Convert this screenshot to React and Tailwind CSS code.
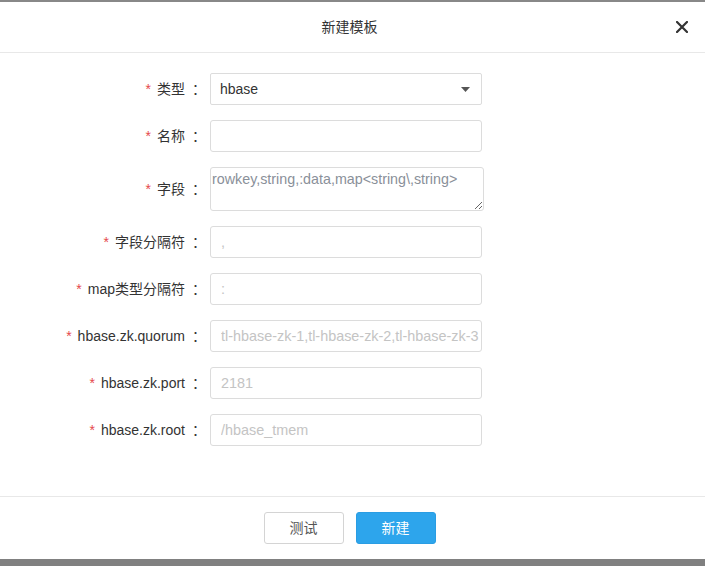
import React from "react";

const font = { fontFamily: '"Liberation Sans", "Noto Sans CJK SC", sans-serif' };

function Label({ children }) {
  return (
    <div className="w-[206px] shrink-0 flex items-center justify-end text-[14px] text-[#333] leading-none">
      <span className="text-[#e5484d] mr-[6px] text-[14px]">*</span>
      <span>{children}</span>
      <span className="ml-[7px]">：</span>
    </div>
  );
}

function Row({ label, children, tall }) {
  return (
    <div className={`flex ${tall ? "h-[44px]" : "h-[32px]"}`}>
      <Label>{label}</Label>
      <div className="ml-[4px]">{children}</div>
    </div>
  );
}

function TextInput({ placeholder, clip }) {
  return (
    <input
      readOnly
      placeholder={placeholder}
      className={`w-[272px] h-[32px] border border-[#dcdcdc] rounded-[3px] pl-[10px] ${clip ? "pr-0" : "pr-[10px]"} text-[14.4px] text-[#333] placeholder:text-[#c4c4c4] outline-none bg-white`}
      style={font}
    />
  );
}

export default function App() {
  return (
    <div className="w-[705px] h-[566px] flex flex-col bg-white" style={font}>
      <div className="h-[2px] bg-[#888888]" />
      <div className="h-[51px] border-b border-[#e8e8e8] flex items-center justify-center pr-[6px] relative">
        <span className="text-[14px] text-[#333]">新建模板</span>
        <svg className="absolute left-[676px] top-[19px]" width="12" height="12" viewBox="0 0 12 12">
          <path d="M1 1 L11 11 M11 1 L1 11" stroke="#333" strokeWidth="2.2" strokeLinecap="square" />
        </svg>
      </div>
      <div className="pt-[20px] pb-[50px] flex flex-col gap-[15px]">
        <Row label="类型">
          <div className="w-[272px] h-[32px] border border-[#dcdcdc] rounded-[2px] flex items-center justify-between pl-[9px] pr-[11px]">
            <span className="text-[14px] text-[#333]">hbase</span>
            <svg width="9" height="5" viewBox="0 0 9 5">
              <path d="M0 0 L9 0 L4.5 5 Z" fill="#555" />
            </svg>
          </div>
        </Row>
        <Row label="名称">
          <TextInput placeholder="" />
        </Row>
        <Row label="字段" tall>
          <textarea
            readOnly
            defaultValue={"rowkey,string,:data,map<string\\,string>"}
            className="w-[274px] h-[44px] border border-[#dcdcdc] rounded-[3px] pl-[1px] pt-[3px] text-[14.3px] leading-[17px] text-[#8a9099] outline-none bg-white"
            style={font}
          />
        </Row>
        <Row label="字段分隔符">
          <TextInput placeholder="," />
        </Row>
        <Row label="map类型分隔符">
          <TextInput placeholder=":" />
        </Row>
        <Row label="hbase.zk.quorum">
          <TextInput placeholder="tl-hbase-zk-1,tl-hbase-zk-2,tl-hbase-zk-3" clip />
        </Row>
        <Row label="hbase.zk.port">
          <TextInput placeholder="2181" />
        </Row>
        <Row label="hbase.zk.root">
          <TextInput placeholder="/hbase_tmem" />
        </Row>
      </div>
      <div className="border-t border-[#e8e8e8] pt-[15px] pb-[15px] pr-[6px] flex justify-center gap-[12px]">
        <button className="w-[80px] h-[32px] border border-[#d4d4d4] rounded-[3px] bg-white text-[14px] text-[#555]" style={font}>
          测试
        </button>
        <button className="w-[80px] h-[32px] border border-[#2a9de3] rounded-[3px] bg-[#2da5ec] text-[14px] text-white" style={font}>
          新建
        </button>
      </div>
      <div className="flex-1 bg-[#808080]" />
    </div>
  );
}
